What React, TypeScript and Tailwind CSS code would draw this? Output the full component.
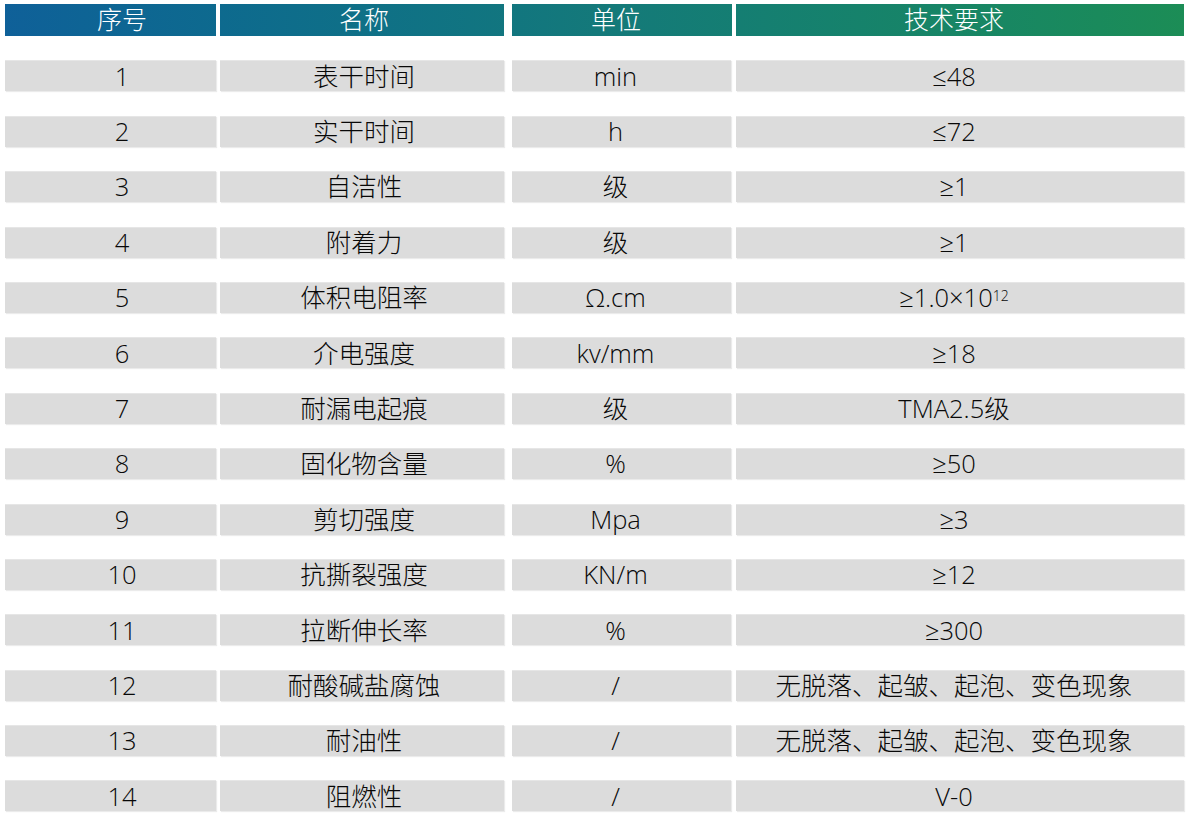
import type { ReactNode } from 'react'

type Row = {
  no: string
  name: string
  unit: string
  spec: ReactNode
}

const rows: Row[] = [
  { no: '1', name: '表干时间', unit: 'min', spec: '≤48' },
  { no: '2', name: '实干时间', unit: 'h', spec: '≤72' },
  { no: '3', name: '自洁性', unit: '级', spec: '≥1' },
  { no: '4', name: '附着力', unit: '级', spec: '≥1' },
  {
    no: '5',
    name: '体积电阻率',
    unit: 'Ω.cm',
    spec: (
      <>
        ≥1.0×10<sup className="relative -top-[2px] align-super text-[14px]">12</sup>
      </>
    ),
  },
  { no: '6', name: '介电强度', unit: 'kv/mm', spec: '≥18' },
  { no: '7', name: '耐漏电起痕', unit: '级', spec: 'TMA2.5级' },
  { no: '8', name: '固化物含量', unit: '%', spec: '≥50' },
  { no: '9', name: '剪切强度', unit: 'Mpa', spec: '≥3' },
  { no: '10', name: '抗撕裂强度', unit: 'KN/m', spec: '≥12' },
  { no: '11', name: '拉断伸长率', unit: '%', spec: '≥300' },
  { no: '12', name: '耐酸碱盐腐蚀', unit: '/', spec: '无脱落、起皱、起泡、变色现象' },
  { no: '13', name: '耐油性', unit: '/', spec: '无脱落、起皱、起泡、变色现象' },
  { no: '14', name: '阻燃性', unit: '/', spec: 'V-0' },
]

const headCell =
  'flex h-[32px] items-center justify-center bg-linear-to-r from-[#0f6099] via-[#14797a] to-[#1c8d55] bg-fixed text-[25px] font-light text-white'

const bodyCell =
  'flex h-[31px] items-center justify-center border-t border-[#e6e6e6] bg-[#dcdcdc] text-[25.5px] font-light leading-none text-[#080808] shadow-[1px_1px_1px_rgba(0,0,0,0.08)]'

export default function App() {
  return (
    <div
      className="h-[820px] w-[1193px] bg-white pt-[4px] pl-[5px]"
      style={{ fontFamily: '"Open Sans", "Noto Sans CJK SC", sans-serif' }}
    >
      <div className="flex flex-col gap-[24.4px]">
        <div className="flex">
          <div className={`${headCell} w-[211px] pl-[23px]`}>序号</div>
          <div className={`${headCell} ml-[4px] w-[284px] pl-[4px]`}>名称</div>
          <div className={`${headCell} ml-[8px] w-[220px] pr-[12px]`}>单位</div>
          <div className={`${headCell} ml-[4px] w-[448px] pr-[12px]`}>技术要求</div>
        </div>

        {rows.map((row) => (
          <div key={row.no} className="flex">
            <div className={`${bodyCell} w-[211px] pl-[23px]`}>{row.no}</div>
            <div className={`${bodyCell} ml-[4px] w-[284px] pl-[4px]`}>{row.name}</div>
            <div className={`${bodyCell} ml-[8px] w-[219px] pr-[12px]`}>{row.unit}</div>
            <div className={`${bodyCell} ml-[5px] w-[448px] pr-[12px]`}>{row.spec}</div>
          </div>
        ))}
      </div>
    </div>
  )
}
